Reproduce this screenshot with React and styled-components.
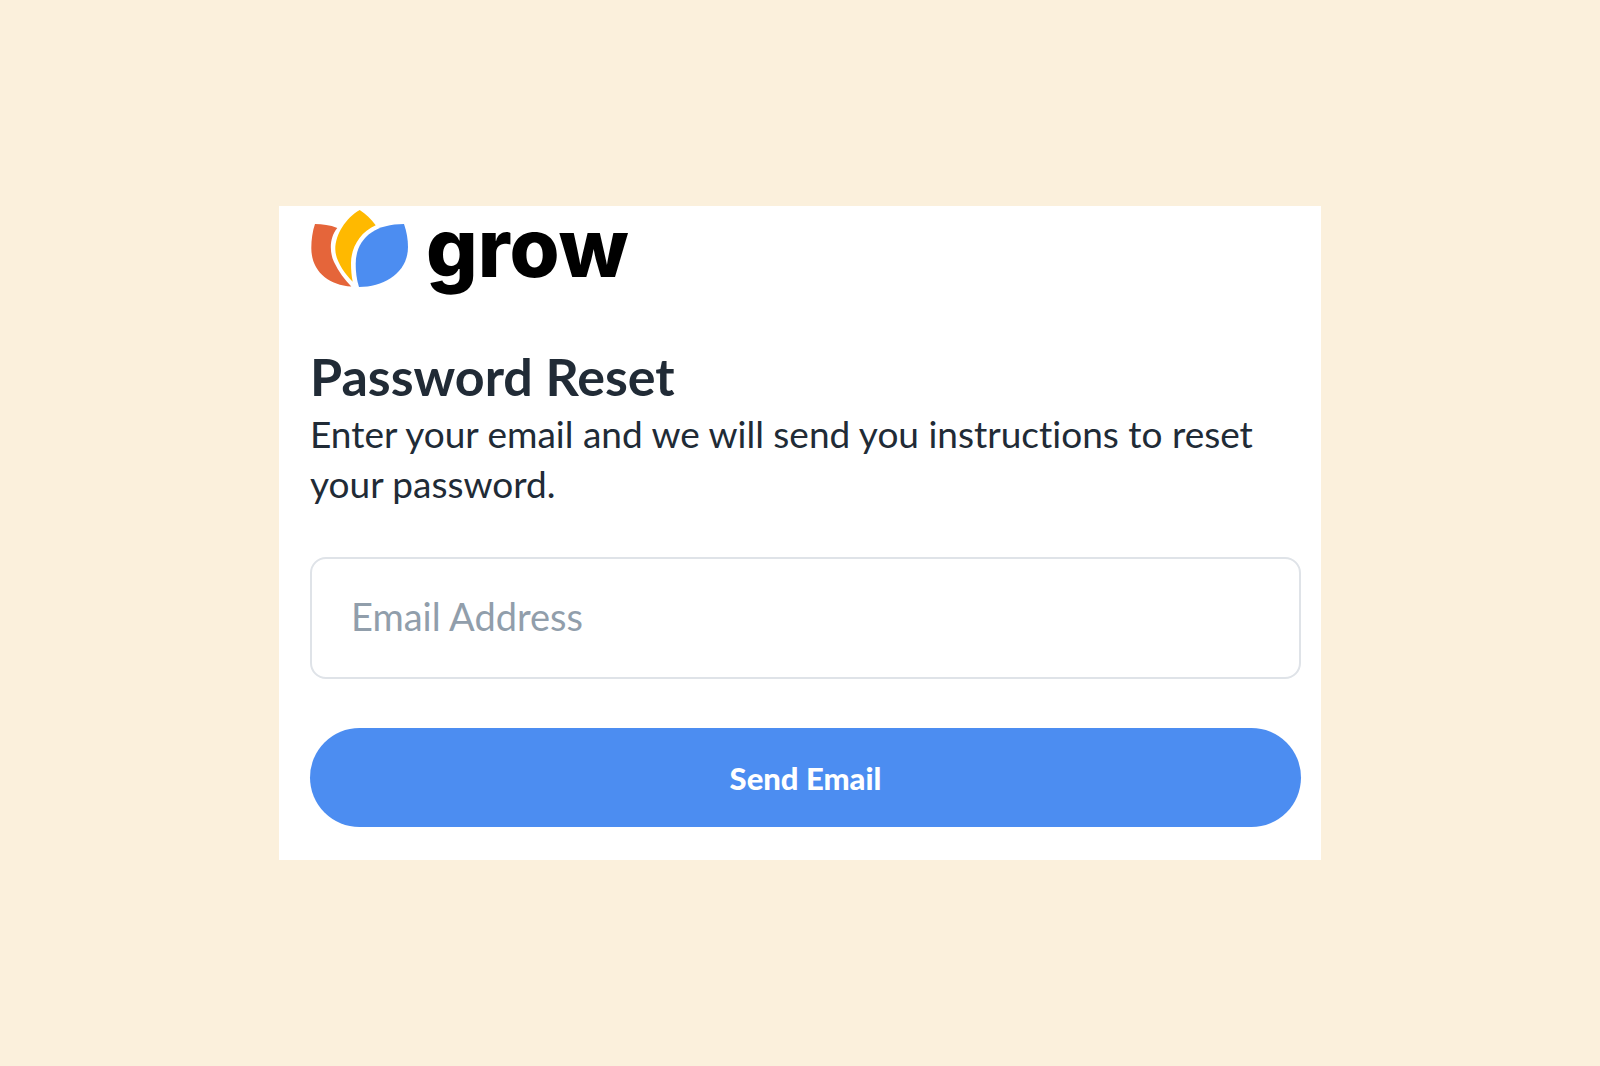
import React, { useState } from "react";
import styled, { createGlobalStyle } from "styled-components";

const GlobalStyle = createGlobalStyle`
  *, *::before, *::after { box-sizing: border-box; }
  body {
    margin: 0;
    background: #fbf0dc;
    color: #212b36;
    font-family: Lato, "Open Sans", sans-serif;
    font-variant-ligatures: none;
  }
`;

const Page = styled.main`
  display: flex;
  align-items: center;
  justify-content: center;
  min-height: 100vh;
`;

const Card = styled.section`
  width: 100%;
  max-width: 1042px;
  padding: 0 20px 33px 31px;
  background: #ffffff;
`;

const Brand = styled.header`
  display: flex;
  align-items: flex-start;
  gap: 17px;
  height: 91px;
  margin-bottom: 48px;
`;

const Mark = styled.svg`
  display: block;
  flex: none;
  width: 99px;
  height: 84px;
`;

const Wordmark = styled.span`
  color: #000000;
  font: 800 81px/84px Inter, sans-serif;
`;

const Title = styled.h1`
  margin: 0 0 2px;
  font-size: 52px;
  font-weight: 700;
  line-height: 62px;
`;

const Intro = styled.p`
  margin: 0 0 48px;
  font-size: 37px;
  line-height: 50px;
`;

const Form = styled.form`
  display: flex;
  flex-direction: column;
  gap: 49px;
`;

const EmailInput = styled.input`
  width: 100%;
  padding: 33px 39px 37px;
  border: 2px solid #dfe3e8;
  border-radius: 16px;
  outline: none;
  background: #ffffff;
  color: inherit;
  font: 400 38px/48px Lato, sans-serif;

  &::placeholder {
    color: #919eab;
    opacity: 1;
  }

  &:focus {
    border-color: #4c8df1;
  }
`;

const SubmitButton = styled.button`
  width: 100%;
  padding: 31px 40px 29px;
  border: 0;
  border-radius: 50px;
  background: #4c8df1;
  color: #ffffff;
  font: 900 31px/39px Lato, sans-serif;
  cursor: pointer;
`;

function GrowMark() {
  return (
    <Mark viewBox="0 0 99 84" aria-hidden="true">
      <path
        fill="#e5653a"
        d="M5 18C12.500 18 20 19 27.300 22C19.500 31 19.200 46 24 56C28.500 65.500 35 74 41.300 80.600C18 79 1.300 65 1.300 42C1.300 34 2.500 25 5 18Z"
      />
      <path
        fill="#ffb900"
        d="M49.700 4C56 8 61 13 65.700 19.300C50 26 41 42 41 57C41 64 41.500 70 42.700 75.700C34 67 25.300 54 25.300 43.300C25.300 28 36 12 49.700 4Z"
      />
      <path
        fill="#4c8df1"
        d="M94 18C96.500 25 98 33 98 41C98 66 75 81 49 81C46.500 73 45.700 66 45.700 58C45.700 33 64 18 94 18Z"
      />
    </Mark>
  );
}

export default function App() {
  const [email, setEmail] = useState("");

  return (
    <>
      <GlobalStyle />
      <Page>
        <Card>
          <Brand>
            <GrowMark />
            <Wordmark>grow</Wordmark>
          </Brand>
          <Title>Password Reset</Title>
          <Intro>
            Enter your email and we will send you instructions to reset your
            password.
          </Intro>
          <Form onSubmit={(event) => event.preventDefault()}>
            <EmailInput
              type="email"
              name="email"
              aria-label="Email Address"
              placeholder="Email Address"
              value={email}
              onChange={(event) => setEmail(event.target.value)}
            />
            <SubmitButton type="submit">Send Email</SubmitButton>
          </Form>
        </Card>
      </Page>
    </>
  );
}
